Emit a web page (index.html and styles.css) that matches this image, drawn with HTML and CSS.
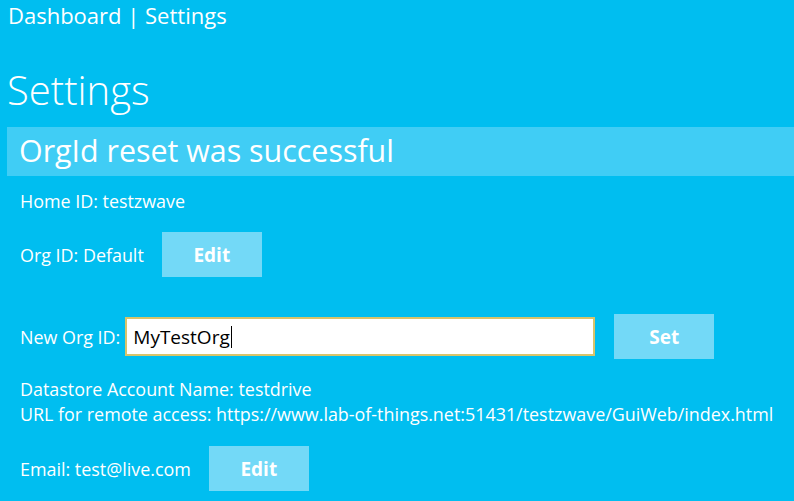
FILE: index.html
```html
<!DOCTYPE html>
<html>
<head>
<meta charset="utf-8">
<link rel="stylesheet" href="styles.css">
</head>
<body>
<div class="page">
  <div class="nav">Dashboard | Settings</div>
  <h1 class="title">Settings</h1>
  <div class="banner">OrgId reset was successful</div>
  <div class="content">
    <div class="line home">Home ID: testzwave</div>
    <div class="row org">
      <span class="label">Org ID: Default</span>
      <button class="btn">Edit</button>
    </div>
    <div class="row neworg">
      <span class="label">New Org ID:</span>
      <div class="input"><span class="val">MyTestOrg</span><span class="caret"></span></div>
      <button class="btn set">Set</button>
    </div>
    <div class="info">
      <div class="line">Datastore Account Name: testdrive</div>
      <div class="line">URL for remote access: https://www.lab-of-things.net:51431/testzwave/GuiWeb/index.html</div>
    </div>
    <div class="row email">
      <span class="label">Email: test@live.com</span>
      <button class="btn">Edit</button>
    </div>
  </div>
</div>
</body>
</html>
```
FILE: styles.css
```css
html, body {
  margin: 0;
  padding: 0;
  background: #00bef0;
  height: 100%;
  overflow: hidden;
}
.page {
  padding-left: 7px;
  color: #ffffff;
  font-family: "Open Sans", "Noto Sans", sans-serif;
}
.nav {
  font-size: 22px;
  line-height: 30px;
  padding-left: 1px;
}
.title {
  margin: 0;
  padding-left: 0;
  margin-top: 35px;
  font-size: 40px;
  font-weight: 300;
  line-height: 50px;
}
.banner {
  margin-top: 12px;
  height: 49px;
  background: #40cdf5;
  font-size: 30.4px;
  line-height: 48px;
  padding-left: 12px;
}
.content {
  padding-left: 13px;
  font-size: 17.9px;
}
.line {
  line-height: 25px;
}
.home {
  margin-top: 13px;
}
.row {
  display: flex;
  align-items: center;
  gap: 18px;
}
.org {
  margin-top: 18px;
}
.btn {
  width: 100px;
  height: 45px;
  border: none;
  background: #73d9f7;
  color: #ffffff;
  font-family: "Open Sans", "Noto Sans", sans-serif;
  font-weight: 700;
  font-size: 19px;
  padding: 0;
}
.neworg {
  margin-top: 37px;
  gap: 0;
}
.neworg .label {
  margin-right: 5px;
}
.input {
  width: 460px;
  height: 35px;
  background: #ffffff;
  border: 2px solid #d8c46a;
  display: flex;
  align-items: center;
  padding-left: 6px;
  color: #000000;
  font-size: 19px;
}
.caret {
  width: 1px;
  height: 22px;
  background: #000000;
  margin-left: 1px;
}
.set {
  margin-left: 19px;
}
.info {
  margin-top: 18px;
}
.email {
  margin-top: 19px;
}
```
